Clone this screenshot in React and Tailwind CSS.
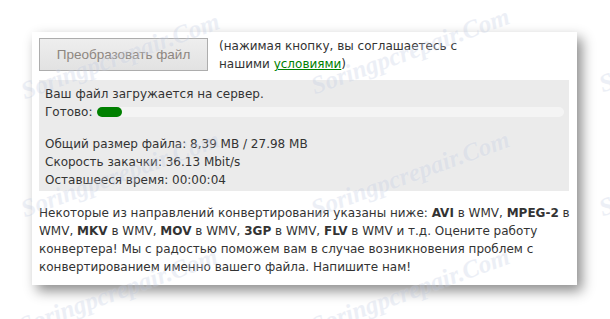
import React from "react";

function Watermark({ className }) {
  return (
    <div
      className={
        "pointer-events-none absolute select-none whitespace-nowrap italic text-[25px] font-bold text-[#c3cde3] opacity-30 [text-shadow:0_0_2px_#fff] [font-family:'Liberation_Serif',serif] -rotate-[20deg] origin-left " +
        className
      }
    >
      Soringpcrepair.Com
    </div>
  );
}

export default function App() {
  return (
    <div className="relative w-[610px] h-[319px] bg-white overflow-hidden [font-family:'DejaVu_Sans',Verdana,sans-serif] text-[#333] text-[12px]">
      <div className="pt-[32px] pl-[32px]">
        <div className="w-[545px] h-[253px] bg-white shadow-[5px_6px_12px_rgba(0,0,0,0.45)] pt-[6px] px-[7px]">
          <div className="flex items-start h-[42px]">
            <button className="w-[169px] h-[33px] border border-[#adadad] bg-gradient-to-b from-[#eeeeee] to-[#e2e2e2] text-[#8d8680] text-[13.5px] [font-family:'Liberation_Sans',Arial,sans-serif] leading-none">
              Преобразовать файл
            </button>
            <div className="ml-[11px] text-[12px] leading-[18px] -mt-[1px]">
              (нажимая кнопку, вы соглашаетесь с
              <br />
              нашими{" "}
              <a className="text-[#008000] underline" href="#">
                условиями
              </a>
              )
            </div>
          </div>
          <div className="w-[530px] h-[111px] bg-[#ebebeb] pl-[6px] pt-[5px] leading-[18px]">
            <div>Ваш файл загружается на сервер.</div>
            <div className="flex items-center">
              <span>Готово:</span>
              <div className="ml-[5px] w-[467px] h-[10px] rounded-[5px] bg-[#f4f4f4]">
                <div className="w-[25px] h-[10px] rounded-[5px] bg-[#008000]"></div>
              </div>
            </div>
            <div className="h-[14px]"></div>
            <div>Общий размер файла: 8,39 MB / 27.98 MB</div>
            <div>Скорость закачки: 36.13 Mbit/s</div>
            <div>Оставшееся время: 00:00:04</div>
          </div>
          <p className="mt-[13px] leading-[18px]">
            Некоторые из направлений конвертирования указаны ниже: <b>AVI</b> в WMV, <b>MPEG-2</b> в
            WMV, <b>MKV</b> в WMV, <b>MOV</b> в WMV, <b>3GP</b> в WMV, <b>FLV</b> в WMV и т.д. Оцените работу
            конвертера! Мы с радостью поможем вам в случае возникновения проблем с конвертированием
            именно вашего файла. Напишите нам!
          </p>
        </div>
      </div>
      <Watermark className="left-[22px] top-[73px]" />
      <Watermark className="left-[312px] top-[68px]" />
      <Watermark className="left-[600px] top-[66px]" />
      <Watermark className="left-[22px] top-[191px]" />
      <Watermark className="left-[312px] top-[191px]" />
      <Watermark className="left-[600px] top-[190px]" />
      <Watermark className="left-[20px] top-[308px]" />
      <Watermark className="left-[312px] top-[308px]" />
    </div>
  );
}
